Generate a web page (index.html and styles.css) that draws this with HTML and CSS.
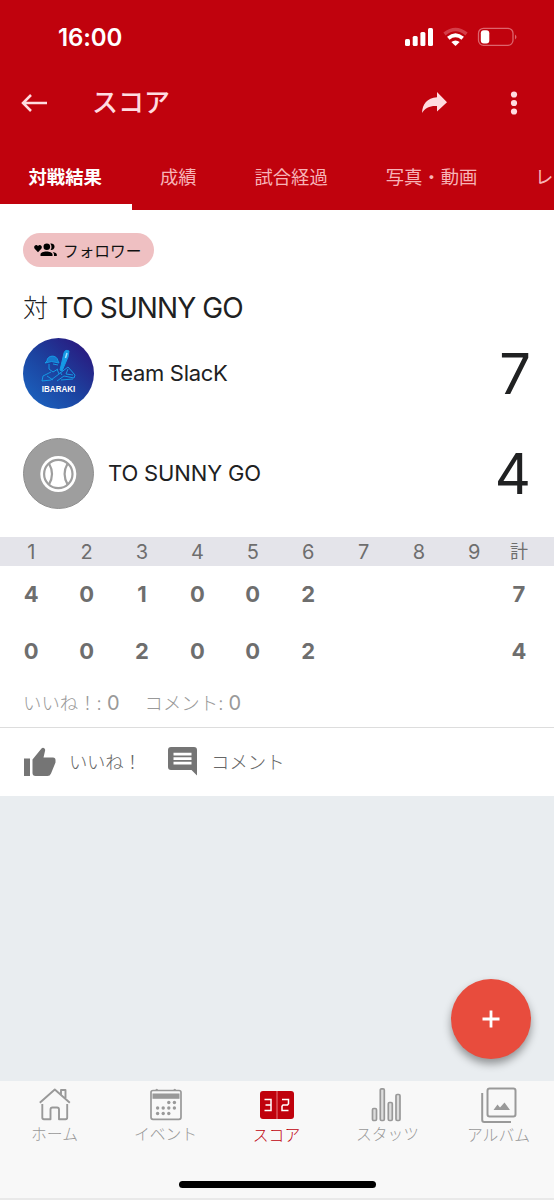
FILE: index.html
```
<!DOCTYPE html>
<html lang="ja">
<head>
<meta charset="utf-8">
<title>スコア</title>
<link rel="stylesheet" href="styles.css">
</head>
<body>
<div class="app">
  <header class="header">
    <div class="status">
      <span class="clock">16:00</span>
      <svg class="status-icons" width="114" height="20" viewBox="0 0 114 20">
        <g fill="#fff"><rect x="1" y="12" width="5" height="7" rx="1.500"/><rect x="8.700" y="9" width="5" height="10" rx="1.500"/><rect x="16.400" y="5" width="5" height="14" rx="1.500"/><rect x="24" y="1" width="5" height="18" rx="1.500"/></g>
        <path d="M40.500 7Q51.500-2 62.500 7" fill="none" stroke="#d43d48" stroke-width="3.600"/>
        <path d="M44.300 11.300Q51.500 5.300 58.700 11.300" fill="none" stroke="#fff" stroke-width="3.800"/>
        <path d="M47.300 15Q51.500 11.800 55.700 15L51.500 19Z" fill="#fff"/>
        <rect x="74.500" y="1.300" width="34.500" height="17" rx="5" fill="none" stroke="#dd656d" stroke-width="1.300"/>
        <rect x="76.800" y="3.200" width="8.500" height="13.200" rx="3" fill="#fff"/>
        <path d="M111 7.500Q114 9.800 111 12.500Z" fill="#dd656d"/>
      </svg>
    </div>
    <div class="appbar">
      <svg class="back" width="27" height="20" viewBox="0 0 27 20" fill="none" stroke="#ffdce0" stroke-width="2.500"><path d="M26 10H2M10 2L2 10l8 8"/></svg>
      <h1 class="title">スコア</h1>
      <svg class="share" width="27" height="23" viewBox="0 0 27 23"><path d="M16 1L26 11.200L16 20.500V15C9 14.500 4 17 1 22C1.500 13 6 7 16 6.300Z" fill="#ffdce0"/></svg>
      <svg class="more" width="8" height="26" viewBox="0 0 8 26" fill="#ffdce0"><circle cx="4" cy="4.500" r="3.100"/><circle cx="4" cy="13" r="3.100"/><circle cx="4" cy="21.500" r="3.100"/></svg>
    </div>
    <nav class="tabs"><span class="tab tab-on">対戦結果</span><span class="tab">成績</span><span class="tab">試合経過</span><span class="tab">写真・動画</span><span class="tab">レ</span></nav>
  </header>

  <main class="card">
    <div class="chip">
      <svg width="23" height="14" viewBox="0 0 23 14"><path d="M4 9.300L.7 5.800C-1 3.400 1.800.6 4 2.900C6.200.6 9 3.400 7.300 5.800Z"/><circle cx="12.800" cy="3.800" r="3.300"/><path d="M16.300.6a3.300 3.300 0 1 1 .3 6.400q2-3 -.3-6.400ZM6.500 13V11.500C6.500 7.500 18.500 7.500 18.500 11.500V13ZM18.700 8.900C21.500 9.300 22.800 10.300 22.800 11.500V13H20V11.500Q20 10 18.700 8.900Z"/></svg>
      <span>フォロワー</span>
    </div>
    <h2 class="heading"><span class="versus">対</span><span class="rival">TO SUNNY GO</span></h2>
    <div class="team">
      <svg class="avatar" viewBox="0 0 71 71">
        <defs><linearGradient id="blue" x1="0.100" y1="0.900" x2="0.850" y2="0.100"><stop offset="0" stop-color="#1b61bd"/><stop offset=".5" stop-color="#1c429f"/><stop offset="1" stop-color="#291b80"/></linearGradient></defs>
        <circle cx="35.500" cy="35.500" r="35.500" fill="url(#blue)"/>
        <g fill="none" stroke="#1599e5" stroke-width="1" stroke-linejoin="round">
          <path d="M26 26V31L30 34L35 31M30 26L35 27M28 34L20 38L19 43L28 42L36 36L34 31M36 36L45 29L52 37L51 40L41 38L34 43M24 38L30 42M38 42L50 41M37 34L39 37M45 31L43 36L50 37"/>
          <path d="M24 23C24 17 34 16 35 23L36 25Q28 22 22 25Z" fill="#1679cf"/>
          <path d="M37 32L41 15Q42 11 46 13L45 19L39 33Z" fill="#1599e5"/>
        </g>
        <path d="M42.500 20L44 15" stroke="#a2dfff" stroke-width="1.500"/>
        <text class="crest" x="18.800" y="53.700" textLength="33.500" lengthAdjust="spacingAndGlyphs">IBARAKI</text>
      </svg>
      <span class="team-name name-a">Team SlacK</span><span class="points">7</span>
    </div>
    <div class="team">
      <svg class="avatar" viewBox="0 0 71 71">
        <circle cx="35.500" cy="35.500" r="35" fill="#9e9e9e" stroke="#8e8e8e"/>
        <circle cx="35.300" cy="36" r="18" fill="#fff"/>
        <g fill="none" stroke="#9e9e9e" stroke-width="2.200"><circle cx="35.300" cy="36" r="14.200"/><path d="M26 25.500Q32 36 26 46.500M44.600 25.500Q38.600 36 44.600 46.500"/></g>
      </svg>
      <span class="team-name name-b">TO SUNNY GO</span><span class="points">4</span>
    </div>
    <div class="innings innings-head"><span>1</span><span>2</span><span>3</span><span>4</span><span>5</span><span>6</span><span>7</span><span>8</span><span>9</span><span class="total">計</span></div>
    <div class="innings"><span>4</span><span>0</span><span>1</span><span>0</span><span>0</span><span>2</span><span></span><span></span><span></span><span>7</span></div>
    <div class="innings"><span>0</span><span>0</span><span>2</span><span>0</span><span>0</span><span>2</span><span></span><span></span><span></span><span>4</span></div>
    <div class="counts"><span class="likes">いいね！: <b>0</b></span><span>コメント: <b>0</b></span></div>
    <div class="actions">
      <svg width="32" height="29" viewBox="0 0 32 29" fill="#757575"><path d="M0 11.500H6V29H0ZM8.500 12.500L17.500 1.500Q19 0 20.500 1.500Q21.500 2.500 21 4L19.500 10.500H29Q31.500 10.500 31.500 13V15.500L27 26.500Q26 29 23.500 29H11.500Q8.500 29 8.500 26Z"/></svg>
      <span class="like-label">いいね！</span>
      <svg width="29" height="29" viewBox="0 0 29 29"><path d="M3 0H26Q29 0 29 3V28.500L23.500 23H3Q0 23 0 20V3Q0 0 3 0Z" fill="#757575"/><path d="M5.500 7.200H23.500M5.500 11.700H23.500M5.500 16.200H23.500" stroke="#fff" stroke-width="2.800"/></svg>
      <span class="comment-label">コメント</span>
    </div>
  </main>

  <div class="fab"><svg width="18" height="18" viewBox="0 0 18 18"><path d="M9 .5V17.500M.5 9H17.500" stroke="#fff" stroke-width="2.800"/></svg></div>

  <footer class="bottom">
    <nav class="nav">
      <div class="nav-item"><svg width="34" height="34" viewBox="0 0 34 34" fill="none" stroke="#999" stroke-width="1.900" stroke-linejoin="round"><path d="M4.300 16V29.500Q4.300 31.200 6 31.200H12.500V21.500Q12.500 19.500 14.500 19.500H19Q21 19.500 21 21.500V31.200H27.500Q29.200 31.200 29.200 29.500V16M1.800 14.800L16.800 1.500L31.800 14.800M23 6.800V2H27.500V11"/></svg><span>ホーム</span></div>
      <div class="nav-item"><svg width="34" height="34" viewBox="0 0 34 34"><rect x="2" y="2.500" width="30" height="28.800" rx="2" fill="none" stroke="#999" stroke-width="1.700"/><path d="M3.500 5.500H30.500V10.800H3.500Z" fill="#999"/><path d="M6 2.500Q7.800-.8 9.500 2.500M24 2.500Q25.800-.8 27.500 2.500" fill="#999"/><g fill="#999"><circle cx="19.800" cy="14.500" r="1.700"/><circle cx="25.400" cy="14.500" r="1.700"/><circle cx="8.600" cy="20" r="1.700"/><circle cx="14.200" cy="20" r="1.700"/><circle cx="19.800" cy="20" r="1.700"/><circle cx="25.400" cy="20" r="1.700"/><circle cx="8.600" cy="25.500" r="1.700"/><circle cx="14.200" cy="25.500" r="1.700"/><circle cx="19.800" cy="25.500" r="1.700"/></g></svg><span>イベント</span></div>
      <div class="nav-item active"><svg width="34" height="34" viewBox="0 0 34 34"><rect x="0" y="3" width="34" height="28" rx="3" fill="#c0020d"/><path d="M17 3V31" stroke="#e67b81" stroke-width="1"/><path d="M4.500 11.500H11V22.500H4.500M5.500 17H11M22 11.500H28.500V15.800L27.500 17H23L22 18.200V22.500H28.500" fill="none" stroke="#fff" stroke-width="1.500"/></svg><span class="low">スコア</span></div>
      <div class="nav-item"><svg width="34" height="36" viewBox="0 0 34 36" fill="#ddd" stroke="#999" stroke-width="1.700"><rect x="1.500" y="21.500" width="4" height="12" rx="1.200"/><rect x="9.300" y="1.800" width="4" height="31.700" rx="1.200"/><rect x="17.300" y="15.500" width="4" height="18" rx="1.200"/><rect x="25" y="7.500" width="4" height="26" rx="1.200"/></svg><span>スタッツ</span></div>
      <div class="nav-item"><svg width="36" height="36" viewBox="0 0 36 36" fill="none" stroke="#999" stroke-width="2"><rect x="6.500" y="1.500" width="28" height="28" rx="2.200"/><path d="M1.200 6V33Q1.200 35 3.200 35H30"/><path d="M12.500 23L16.500 17.500L19 20.500L23.500 15.500L29 23Z" fill="#999" stroke="none"/></svg><span class="low">アルバム</span></div>
    </nav>
    <div class="home-bar"></div>
  </footer>
</div>
</body>
</html>
```

FILE: styles.css
```
* { box-sizing: border-box; }
body { margin: 0; font-family: Inter, "Noto Sans CJK JP", sans-serif; color: #202122; }
svg { display: block; flex: none; }
.app { width: 554px; height: 1200px; display: flex; flex-direction: column; background: #e9edf0; overflow: hidden; position: relative; }

.header { height: 210px; background: #c0020d; flex: none; }
.status { height: 75px; display: flex; align-items: center; justify-content: space-between; padding: 0 36px 0 58px; }
.status-icons { margin-top: -2px; }
.clock { color: #fff; font-size: 24px; font-weight: 600; line-height: 30px; letter-spacing: -0.1px; }
.appbar { height: 69px; display: flex; align-items: center; padding: 0 36px 14px 21px; color: #ffdce0; }
.title { margin: 0 0 0 44px; font-size: 26px; font-weight: 500; line-height: 36px; }
.share { margin-left: auto; }
.more { margin-left: 62px; }
.tabs { height: 66px; display: flex; overflow: hidden; }
.tab { flex: none; padding: 0 29.200px 0 28.700px; font-size: 18.350px; line-height: 66px; color: #f7b3b7; }
.tab:first-child { padding: 0 30px 0 28.500px; }
.tab:nth-child(2) { padding-left: 28px; }
.tab:last-child { padding: 0 0 0 28.500px; }
.tab-on { color: #fff; font-weight: 700; border-bottom: 6px solid #fff; }

.card { height: 586px; background: #fff; flex: none; display: flex; flex-direction: column; }
.chip { display: flex; align-items: center; gap: 6px; width: 131px; height: 34px; margin: 23px 0 0 23px; padding-left: 11px; border-radius: 17px; background: #efc0c2; color: #111; font-size: 15.700px; }
.heading { display: flex; align-items: center; gap: 8px; height: 71px; margin: 0; padding: 10px 0 0 23px; font-weight: 400; }
.versus { font-size: 25px; font-weight: 300; margin-top: -4px; }
.rival { font-size: 28px; letter-spacing: -0.9px; }
.team { display: flex; align-items: center; height: 71px; margin-bottom: 29px; padding: 0 23px 0 23px; }
.avatar { width: 71px; height: 71px; }
.crest { font: 700 9px "Liberation Sans", sans-serif; fill: #fff; }
.team-name { margin: -1px 0 0 14px; font-size: 22px; }
.name-a { letter-spacing: -0.3px; }
.name-b { letter-spacing: -0.15px; }
.points { margin-left: auto; font-size: 56px; line-height: 71px; padding-top: 2px; }
.innings { display: grid; grid-template-columns: repeat(9, 55.400px) 34px; padding: 0 0 2px 3.500px; height: 57px; align-items: center; text-align: center; font-size: 22px; font-weight: 700; color: #6e6e6e; }
.innings-head { height: 29px; padding-bottom: 0; font-size: 20px; font-weight: 400; background: #e4e4ea; margin-top: -1px; }
.total { font-size: 18px; font-weight: 400; line-height: 24px; }
.counts { display: flex; gap: 25px; align-items: center; height: 48px; padding: 0 0 4px 23px; color: #999; font-size: 18.400px; font-weight: 300; border-bottom: 1px solid #ddd; }
.counts b { font-weight: 400; font-size: 20px; }
.actions { display: flex; align-items: center; height: 68px; padding: 0 0 1px 24px; color: #666; font-size: 18.400px; font-weight: 300; }
.like-label, .comment-label { margin-top: -2px; }
.like-label { width: 99px; margin-left: 13px; letter-spacing: -.3px; }
.comment-label { margin-left: 14px; }

.fab { position: absolute; left: 451px; top: 979px; width: 80px; height: 80px; border-radius: 50%; background: #e84c3d; display: flex; align-items: center; justify-content: center; box-shadow: 0 5px 8px rgba(0,0,0,.38); }
.bottom { margin-top: auto; height: 119px; background: #f8f8f8; border-bottom: 2px solid #e9e9e9; }
.nav { display: grid; grid-template-columns: repeat(5, 111px); margin-left: -1px; height: 100px; }
.nav-item { display: flex; flex-direction: column; align-items: center; padding-top: 6px; color: #999; font-size: 15.800px; font-weight: 300; }
.nav-item svg { height: 36px; }
.nav-item span { line-height: 24px; }
.nav-item .low { margin-top: 1px; }
.active { color: #c0020d; }
.home-bar { width: 197px; height: 7px; margin: 0 auto; border-radius: 4px; background: #000; }
```
